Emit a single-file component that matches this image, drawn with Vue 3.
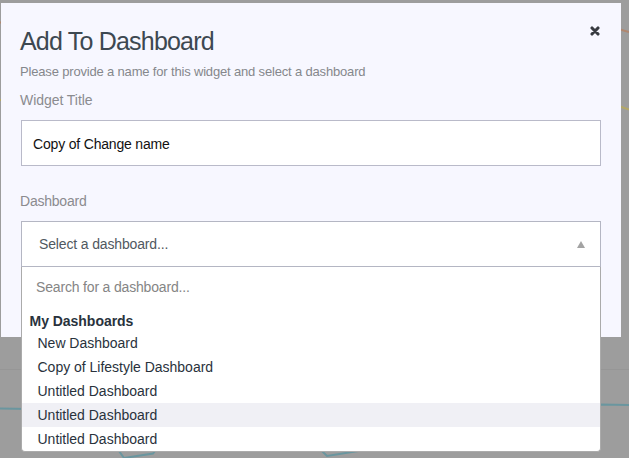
<script setup>
import { ref } from 'vue'

const title = ref('Copy of Change name')
const search = ref('')
const dashboards = [
  'New Dashboard',
  'Copy of Lifestyle Dashboard',
  'Untitled Dashboard',
  'Untitled Dashboard',
  'Untitled Dashboard',
]
const highlighted = ref(3)
</script>

<template>
  <div class="page">
    <svg class="chart" width="629" height="458" viewBox="0 0 629 458" fill="none">
      <path d="M0 369.5H629" stroke="#969696" />
      <path d="M0 22.5H2M620 29.500L629 32" stroke="#b08770" stroke-width="2" />
      <path d="M0 100H2M620 106.500L629 109.500" stroke="#b3a767" stroke-width="2" />
      <path d="M0 408.500L90 410L124 458L153 453.500L160 444M290 420L327 456L390 446L600 404.500L629 405" stroke="#6a969f" stroke-width="2" />
    </svg>
    <section class="modal">
      <header class="head">
        <h1>Add To Dashboard</h1>
        <button class="close" aria-label="Close">
          <svg width="10" height="10" viewBox="0 0 10 10">
            <path d="M2 2L8 8M8 2L2 8" stroke="#373a40" stroke-width="3.100" stroke-linecap="round" />
          </svg>
        </button>
      </header>
      <p class="intro">Please provide a name for this widget and select a dashboard</p>
      <label class="label first">Widget Title</label>
      <input v-model="title" class="field" type="text" />
      <label class="label second">Dashboard</label>
      <div class="select">
        <div class="control">
          <span>Select a dashboard...</span>
          <svg width="8" height="7" viewBox="0 0 8 7"><path d="M4 0L8 7H0Z" fill="#a3a3a3" /></svg>
        </div>
        <div class="menu">
          <input v-model="search" class="search" placeholder="Search for a dashboard..." />
          <div class="group">My Dashboards</div>
          <ul>
            <li v-for="(name, i) in dashboards" :key="i" :class="{ active: i === highlighted }" @mouseenter="highlighted = i">{{ name }}</li>
          </ul>
        </div>
      </div>
    </section>
  </div>
</template>

<style>
body { overflow: hidden; }
</style>

<style scoped>
* { box-sizing: border-box; }
.page {
  position: relative;
  width: 629px;
  height: 458px;
  padding: 3px 8px 0 1px;
  overflow: hidden;
  background: #9d9d9d;
  font-family: "Liberation Sans", Arial, sans-serif;
  font-size: 14px;
}
.chart { position: absolute; inset: 0; }
.modal {
  position: relative;
  height: 334px;
  padding: 22px 20px 0;
  background: #f7f7ff;
}
.head { display: flex; justify-content: space-between; height: 32px; }
h1 {
  margin: 0 0 0 -1px;
  font-size: 25px;
  line-height: 32px;
  font-weight: 400;
  letter-spacing: -0.8px;
  color: #3d4851;
}
.close { width: 10px; height: 10px; margin: 1px 1px 0 0; padding: 0; border: 0; background: none; }
.close svg { display: block; }
.intro {
  margin: 5px 0 0 -1px;
  font-size: 13px;
  line-height: 20px;
  letter-spacing: -0.17px;
  color: #85878c;
}
.label { display: block; height: 20px; margin-left: -1px; line-height: 20px; letter-spacing: -0.22px; color: #8b8b8f; }
.first { margin-top: 8px; letter-spacing: -0.05px; }
.second { margin-top: 25px; }
.field {
  display: block;
  width: 580px;
  height: 46px;
  margin-top: 10px;
  padding: 2px 11px 0;
  border: 1px solid #b9bac9;
  border-radius: 0;
  outline: 0;
  background: #fff;
  font: inherit;
  letter-spacing: -0.18px;
  color: #111;
}
.select { width: 580px; margin-top: 10px; }
.control {
  display: flex;
  align-items: center;
  justify-content: space-between;
  height: 46px;
  padding: 0 15px 0 17px;
  border: 1px solid #b4b6c3;
  background: #fff;
  letter-spacing: -0.15px;
  color: #505861;
}
.menu {
  position: relative;
  height: 185px;
  padding-top: 6px;
  border: 1px solid #ababab;
  border-top: 0;
  border-radius: 0 0 4px 4px;
  background: #fff;
  color: #29323c;
}
.search {
  display: block;
  width: 100%;
  height: 28px;
  padding: 0 14px;
  border: 0;
  outline: 0;
  background: transparent;
  font: inherit;
  letter-spacing: -0.17px;
}
.search::placeholder { color: #858585; opacity: 1; }
.group { margin-top: 9px; padding-left: 7.5px; height: 21px; line-height: 22px; font-weight: 700; letter-spacing: -0.03px; }
ul { list-style: none; margin: 0; padding: 0; }
li { height: 24px; padding-left: 15.5px; line-height: 24px; letter-spacing: -0.01px; }
.active { background: #f0f0f5; }
</style>
